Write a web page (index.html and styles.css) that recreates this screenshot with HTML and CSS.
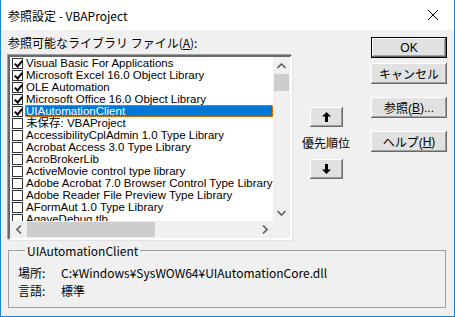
FILE: index.html
```html
<!DOCTYPE html>
<html lang="ja">
<head>
    <meta charset="UTF-8">
    <title>参照設定 - VBAProject</title>
    <link rel="stylesheet" href="styles.css">
</head>
<body>
    <div class="window">
        <div class="titlebar">
            <span class="title">参照設定 - VBAProject</span>
            <svg class="close" width="12" height="12" viewBox="0 0 12 12">
                <path d="M1 1 L11 11 M11 1 L1 11" stroke="#000" stroke-width="1" fill="none"/>
            </svg>
        </div>

        <div class="content">
            <div class="left">
                <div class="label">参照可能なライブラリ ファイル(<u>A</u>):</div>
                <div class="listbox">
                    <div class="list-main">
                        <div class="rows">
                            <div class="row"><span class="check on"></span><span class="name">Visual Basic For Applications</span></div>
                            <div class="row"><span class="check on"></span><span class="name">Microsoft Excel 16.0 Object Library</span></div>
                            <div class="row"><span class="check on"></span><span class="name">OLE Automation</span></div>
                            <div class="row"><span class="check on"></span><span class="name">Microsoft Office 16.0 Object Library</span></div>
                            <div class="row"><span class="check on"></span><span class="name selected">UIAutomationClient</span></div>
                            <div class="row"><span class="check"></span><span class="name">未保存: VBAProject</span></div>
                            <div class="row"><span class="check"></span><span class="name">AccessibilityCplAdmin 1.0 Type Library</span></div>
                            <div class="row"><span class="check"></span><span class="name">Acrobat Access 3.0 Type Library</span></div>
                            <div class="row"><span class="check"></span><span class="name">AcroBrokerLib</span></div>
                            <div class="row"><span class="check"></span><span class="name">ActiveMovie control type library</span></div>
                            <div class="row"><span class="check"></span><span class="name">Adobe Acrobat 7.0 Browser Control Type Library</span></div>
                            <div class="row"><span class="check"></span><span class="name">Adobe Reader File Preview Type Library</span></div>
                            <div class="row"><span class="check"></span><span class="name">AFormAut 1.0 Type Library</span></div>
                            <div class="row"><span class="check"></span><span class="name">AgaveDebug.tlb</span></div>
                        </div>
                        <div class="vscroll">
                            <div class="sb-btn">
                                <svg width="9" height="6" viewBox="0 0 9 6"><path d="M0.5 5 L4.5 1 L8.5 5" stroke="#606060" stroke-width="1.6" fill="none"/></svg>
                            </div>
                            <div class="vthumb"></div>
                            <div class="sb-track"></div>
                            <div class="sb-btn">
                                <svg width="9" height="6" viewBox="0 0 9 6"><path d="M0.5 1 L4.5 5 L8.5 1" stroke="#606060" stroke-width="1.6" fill="none"/></svg>
                            </div>
                        </div>
                    </div>
                    <div class="hscroll">
                        <div class="sb-btn">
                            <svg width="6" height="9" viewBox="0 0 6 9"><path d="M5 0.5 L1 4.5 L5 8.5" stroke="#606060" stroke-width="1.6" fill="none"/></svg>
                        </div>
                        <div class="hthumb"></div>
                        <div class="sb-track"></div>
                        <div class="sb-btn">
                            <svg width="6" height="9" viewBox="0 0 6 9"><path d="M1 0.5 L5 4.5 L1 8.5" stroke="#606060" stroke-width="1.6" fill="none"/></svg>
                        </div>
                        <div class="corner"></div>
                    </div>
                </div>
            </div>

            <div class="middle">
                <button class="btn arrow">
                    <svg width="9" height="10" viewBox="0 0 9 10"><path d="M4.5 0 L9 4.5 L6 4.5 L6 10 L3 10 L3 4.5 L0 4.5 Z" fill="#000"/></svg>
                </button>
                <div class="priority">優先順位</div>
                <button class="btn arrow">
                    <svg width="9" height="10" viewBox="0 0 9 10"><path d="M4.5 10 L9 5.5 L6 5.5 L6 0 L3 0 L3 5.5 L0 5.5 Z" fill="#000"/></svg>
                </button>
            </div>

            <div class="right">
                <button class="btn default">OK</button>
                <button class="btn cancel">キャンセル</button>
                <button class="btn browse">参照(<u>B</u>)...</button>
                <button class="btn help">ヘルプ(<u>H</u>)</button>
            </div>
        </div>

        <fieldset class="info">
            <legend>UIAutomationClient</legend>
            <div class="info-row"><span class="key">場所:</span><span>C:¥Windows¥SysWOW64¥UIAutomationCore.dll</span></div>
            <div class="info-row"><span class="key">言語:</span><span>標準</span></div>
        </fieldset>
    </div>
</body>
</html>
```

FILE: styles.css
```css
* {
    margin: 0;
    padding: 0;
    box-sizing: border-box;
}

body {
    font-family: "Liberation Sans", "Noto Sans CJK JP", sans-serif;
    font-size: 12px;
    color: #000;
    background: #f0f0f0;
}

.window {
    width: 455px;
    height: 317px;
    background: #f0f0f0;
    border: 1px solid #1883d7;
    border-top: none;
}

.titlebar {
    height: 30px;
    background: #fff;
    display: flex;
    align-items: center;
    justify-content: space-between;
    padding: 0 15px 0 7px;
}

.title {
    font-family: "Noto Sans CJK JP", sans-serif;
    font-size: 12px;
}

.content {
    display: flex;
    padding: 0 7px;
}

.left {
    width: 284px;
}

.label {
    font-family: "Noto Sans CJK JP", sans-serif;
    height: 25px;
    line-height: 14px;
    padding-top: 6px;
}

.listbox {
    height: 185px;
    background: #fff;
    border-top: 2px solid #696969;
    border-left: 2px solid #696969;
    border-right: 2px solid #fff;
    border-bottom: 2px solid #fff;
    box-shadow: -1px -1px 0 #a0a0a0, 1px 1px 0 #e3e3e3;
    display: flex;
    flex-direction: column;
}

.list-main {
    flex: 1;
    display: flex;
    overflow: hidden;
}

.rows {
    flex: 1;
    overflow: hidden;
    padding-left: 2px;
}

.row {
    height: 12px;
    display: flex;
    align-items: center;
    white-space: nowrap;
    overflow: hidden;
}

.check {
    width: 11px;
    height: 11px;
    border: 1px solid #333;
    background: #fff;
    margin-right: 2px;
    flex: none;
    position: relative;
}

.check.on::after {
    content: "";
    position: absolute;
    left: 3px;
    top: 0px;
    width: 3px;
    height: 6px;
    border-right: 2px solid #000;
    border-bottom: 2px solid #000;
    transform: rotate(40deg);
}

.name {
    display: block;
    height: 12px;
    font-size: 11.5px;
    line-height: 12px;
    padding: 0 1px;
}

.name.selected {
    flex: 1;
    background: #0078d7;
    color: #fff;
    outline: 1px dotted #ff8a28;
    outline-offset: -1px;
}

.vscroll {
    width: 17px;
    background: #f0f0f0;
    display: flex;
    flex-direction: column;
}

.sb-btn {
    width: 17px;
    height: 17px;
    display: flex;
    align-items: center;
    justify-content: center;
    flex: none;
}

.vthumb {
    height: 17px;
    margin: 0 1px;
    background: #cdcdcd;
}

.sb-track {
    flex: 1;
}

.hscroll {
    height: 17px;
    background: #f0f0f0;
    display: flex;
}

.hthumb {
    width: 128px;
    margin: 1px 0;
    background: #cdcdcd;
}

.corner {
    width: 17px;
    background: #f0f0f0;
}

.btn {
    font-family: "Liberation Sans", "Noto Sans CJK JP", sans-serif;
    font-size: 12px;
    background: #e1e1e1;
    border: none;
    box-shadow: inset -1px -1px 0 #696969, inset 1px 1px 0 #fff, inset -2px -2px 0 #a0a0a0, inset 2px 2px 0 #e3e3e3;
    display: flex;
    align-items: center;
    justify-content: center;
}

.middle {
    width: 68px;
    display: flex;
    flex-direction: column;
    align-items: center;
    padding-top: 77px;
}

.arrow {
    width: 33px;
    height: 20px;
}

.priority {
    font-family: "Noto Sans CJK JP", sans-serif;
    margin: 9px 0 10px;
    line-height: 13px;
}

.right {
    margin-left: 11px;
    display: flex;
    flex-direction: column;
    padding-top: 7px;
}

.right .btn {
    width: 76px;
    height: 21px;
}

.default {
    border: 1px solid #000;
    box-shadow: inset -1px -1px 0 #696969, inset 1px 1px 0 #fff, inset -2px -2px 0 #a0a0a0;
}

.cancel {
    margin-top: 5px;
}

.browse {
    margin-top: 13px;
}

.help {
    margin-top: 13px;
}

.info {
    margin: 4px 8px 0 7px;
    height: 64px;
    border: 1px solid #a0a0a0;
    padding: 6px 0 0 9px;
}

.info legend {
    font-family: "Noto Sans CJK JP", sans-serif;
    margin-left: 7px;
    padding: 0 2px;
    line-height: 13px;
}

.info-row {
    height: 18px;
    display: flex;
    align-items: center;
    font-family: "Noto Sans CJK JP", sans-serif;
}

.key {
    width: 43px;
}
```
